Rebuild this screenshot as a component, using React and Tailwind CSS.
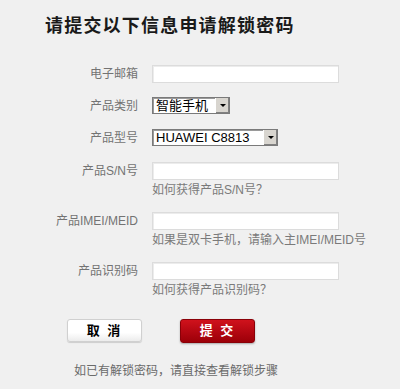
import React from "react";

const font = { fontFamily: '"Liberation Sans", "Noto Sans CJK SC", sans-serif' };

const Field = ({ label, className = "", children }) => (
  <div className={`grid grid-cols-[138px_1fr] gap-x-[14px] ${className}`}>
    <div className="text-right text-[12px] leading-[18px] text-[#737373]">{label}</div>
    <div>{children}</div>
  </div>
);

const TextInput = () => (
  <div className="w-[187px] h-[18px] bg-white border border-[#dcdcdc] shadow-[inset_1px_1px_0_#ececec]" />
);

const Select = ({ value, width }) => (
  <div
    className="flex items-center h-[17px] bg-white border border-[#7a7a7a] shadow-[inset_1px_1px_0_#9a9a9a]"
    style={{ width }}
  >
    <span className="flex-1 pl-[3px] text-[13px] leading-[15px] text-black truncate">{value}</span>
    <span className="flex items-center justify-center w-[14px] h-[15px] bg-[#d8d5cf] border-l border-[#fff] shadow-[inset_-1px_-1px_0_#808080]">
      <span className="w-0 h-0 border-l-[3px] border-r-[3px] border-t-[3px] border-l-transparent border-r-transparent border-t-black" />
    </span>
  </div>
);

const Help = ({ children, className = "" }) => (
  <div className={`pl-[152px] text-[12px] leading-[16px] text-[#7a7a7a] ${className}`}>{children}</div>
);

const App = () => {
  return (
    <div className="w-[400px] h-[389px] bg-[#f0f0f0] overflow-hidden" style={font}>
      <h1 className="pl-[45px] pt-[13px] text-[18px] leading-[26px] font-bold tracking-[1.2px] text-[#1a1a1a]">
        请提交以下信息申请解锁密码
      </h1>

      <Field label="电子邮箱" className="mt-[26px]">
        <TextInput />
      </Field>
      <Field label="产品类别" className="mt-[14px]">
        <Select value="智能手机" width={78} />
      </Field>
      <Field label="产品型号" className="mt-[14px]">
        <Select value="HUAWEI C8813" width={126} />
      </Field>

      <Field label="产品S/N号" className="mt-[15px]">
        <TextInput />
      </Field>
      <Help className="mt-[2px]">如何获得产品S/N号？</Help>

      <Field label="产品IMEI/MEID" className="mt-[14px]">
        <TextInput />
      </Field>
      <Help className="mt-[2px]">如果是双卡手机，请输入主IMEI/MEID号</Help>

      <Field label="产品识别码" className="mt-[14px]">
        <TextInput />
      </Field>
      <Help className="mt-[2px]">如何获得产品识别码？</Help>

      {/* buttons */}
      <div className="flex pl-[67px] gap-[38px] mt-[21px]">
        <button className="w-[75px] h-[23px] rounded-[3px] border border-[#d0d0d0] bg-gradient-to-b from-white from-60% to-[#ececec] shadow-[0_1px_1px_rgba(0,0,0,0.15)] text-[13px] font-bold tracking-[2px] text-black">
          取 消
        </button>
        <button className="w-[75px] h-[24px] rounded-[3px] border border-[#8a0008] bg-gradient-to-b from-[#d0121c] to-[#9c0008] shadow-[0_1px_2px_rgba(0,0,0,0.3)] text-[13px] font-bold tracking-[2px] text-white">
          提 交
        </button>
      </div>

      <p className="pl-[74px] mt-[20px] text-[12px] leading-[16px] text-[#6a6a6a]">
        如已有解锁密码，请直接查看解锁步骤
      </p>
    </div>
  );
};

export default App;
